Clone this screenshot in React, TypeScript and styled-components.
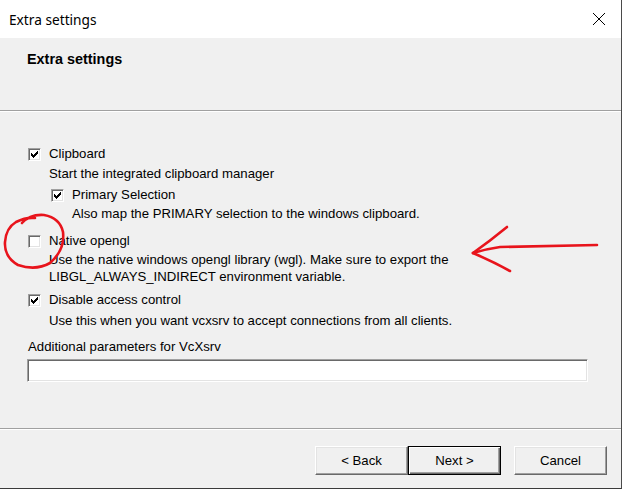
import React from "react";
import styled, { createGlobalStyle } from "styled-components";

const Global = createGlobalStyle`
  html, body { margin: 0; padding: 0; background: #ffffff; }
  body { font-family: "Liberation Sans", Arial, sans-serif; }
`;

const Window = styled.div`
  position: relative;
  width: 621px;
  height: 488px;
  border-right: 1px solid #4a4a4a;
  border-bottom: 1px solid #3a3a3a;
  background: #f0f0f0;
  display: flex;
  flex-direction: column;
  overflow: hidden;
  color: #000;
`;

const TitleBar = styled.div`
  height: 38px;
  flex: none;
  background: #ffffff;
  display: flex;
  align-items: center;
  justify-content: space-between;
  padding: 0 15px 0 9px;
  font-family: "Noto Sans", "Open Sans", sans-serif;
  font-size: 13.7px;
`;

const CloseBtn = styled.div`
  width: 14px;
  height: 14px;
  display: flex;
  align-items: center;
  justify-content: center;
`;

const Header = styled.div`
  height: 72px;
  flex: none;
  box-sizing: border-box;
  padding: 13px 0 0 27px;
  font-size: 14.4px;
  font-weight: bold;
`;

const Separator = styled.div`
  flex: none;
  height: 1px;
  background: #a0a0a0;
  border-bottom: 1px solid #ffffff;
`;

const Body = styled.div`
  flex: 1;
  padding: 33px 0 0 28px;
  font-size: 13.2px;
  line-height: 18px;
`;

const Option = styled.div<{ $mt: number; $indent?: number }>`
  margin-top: ${(p) => p.$mt}px;
  margin-left: ${(p) => p.$indent ?? 0}px;
`;

const CheckRow = styled.div`
  display: flex;
  align-items: center;
  height: 18px;
`;

const Box = styled.span`
  box-sizing: border-box;
  width: 13px;
  height: 13px;
  flex: none;
  background: #fff;
  border: 1px solid;
  border-color: #a0a0a0 #ffffff #ffffff #a0a0a0;
  box-shadow: inset 1px 1px 0 #696969, inset -1px -1px 0 #e3e3e3;
  display: flex;
  align-items: center;
  justify-content: center;
  margin-right: 8px;
`;

const Desc = styled.div<{ $mt?: number; $lh?: number }>`
  margin-left: 21px;
  margin-top: ${(p) => p.$mt ?? 1}px;
  line-height: ${(p) => p.$lh ?? 18}px;
`;

const FieldLabel = styled.div`
  margin-top: 8px;
`;

const Input = styled.div`
  box-sizing: border-box;
  margin-top: 3px;
  width: 561px;
  height: 23px;
  margin-left: -1px;
  background: #fff;
  border: 1px solid;
  border-color: #a0a0a0 #ffffff #ffffff #a0a0a0;
  box-shadow: inset 1px 1px 0 #696969, inset -1px -1px 0 #e3e3e3;
`;

const Footer = styled.div`
  flex: none;
  height: 58px;
  box-sizing: border-box;
  display: flex;
  align-items: flex-start;
  padding: 16px 0 0 315px;
`;

const Button = styled.div<{ $default?: boolean; $ml?: number }>`
  box-sizing: border-box;
  width: 93px;
  height: 29px;
  margin-left: ${(p) => p.$ml ?? 0}px;
  display: flex;
  align-items: center;
  justify-content: center;
  font-size: 13.2px;
  background: #f0f0f0;
  border: 1px solid;
  border-color: ${(p) => (p.$default ? "#000" : "#ffffff #696969 #696969 #ffffff")};
  box-shadow: ${(p) =>
    p.$default
      ? "inset 1px 1px 0 #ffffff, inset -1px -1px 0 #696969, inset -2px -2px 0 #a0a0a0"
      : "inset -1px -1px 0 #a0a0a0, inset 1px 1px 0 #e3e3e3"};
`;

const Overlay = styled.svg`
  position: absolute;
  left: 0;
  top: 0;
  width: 622px;
  height: 489px;
  pointer-events: none;
`;

const Check = () => (
  <svg width="7" height="7" viewBox="0 0 7 7" shapeRendering="crispEdges">
    <polygon points="0,2 2,4 7,-1 7,2 2,7 0,5" fill="#000" />
  </svg>
);

const CheckBox = ({ checked }: { checked?: boolean }) => <Box>{checked && <Check />}</Box>;

export default function App() {
  return (
    <>
      <Global />
      <Window>
        <TitleBar>
          <span>Extra settings</span>
          <CloseBtn>
            <svg width="14" height="14" viewBox="0 0 14 14">
              <path d="M1 1 L13 13 M13 1 L1 13" stroke="#000" strokeWidth="1" />
            </svg>
          </CloseBtn>
        </TitleBar>
        <Header>Extra settings</Header>
        <Separator />
        <Body>
          <Option $mt={0}>
            <CheckRow>
              <CheckBox checked />
              Clipboard
            </CheckRow>
            <Desc $mt={2}>Start the integrated clipboard manager</Desc>
            <Option $mt={3} $indent={23}>
              <CheckRow>
                <CheckBox checked />
                Primary Selection
              </CheckRow>
              <Desc>Also map the PRIMARY selection to the windows clipboard.</Desc>
            </Option>
          </Option>
          <Option $mt={9}>
            <CheckRow>
              <CheckBox />
              Native opengl
            </CheckRow>
            <Desc $lh={17}>
              Use the native windows opengl library (wgl). Make sure to export the
              <br />
              LIBGL_ALWAYS_INDIRECT environment variable.
            </Desc>
          </Option>
          <Option $mt={6}>
            <CheckRow>
              <CheckBox checked />
              Disable access control
            </CheckRow>
            <Desc $mt={3}>Use this when you want vcxsrv to accept connections from all clients.</Desc>
          </Option>
          <FieldLabel>Additional parameters for VcXsrv</FieldLabel>
          <Input />
        </Body>
        <Separator />
        <Footer>
          <Button>&lt; Back</Button>
          <Button $default>Next &gt;</Button>
          <Button $ml={13}>Cancel</Button>
        </Footer>
        <Overlay viewBox="0 0 622 489">
          <g fill="none" stroke="#e8141c" strokeWidth="2.6" strokeLinecap="round" strokeLinejoin="round">
            <path d="M22 223 Q30 214 44 215 Q60 218 63 232 Q65 250 50 263 Q36 271 18 265 Q4 257 5 242 Q6 228 16 222 Q26 217 35 218" />
            <path d="M597 245 L500 247 Q486 249 473 253" />
            <path d="M507 227 Q490 241 473 253" />
            <path d="M473 253 Q494 262 510 271" />
          </g>
        </Overlay>
      </Window>
    </>
  );
}
